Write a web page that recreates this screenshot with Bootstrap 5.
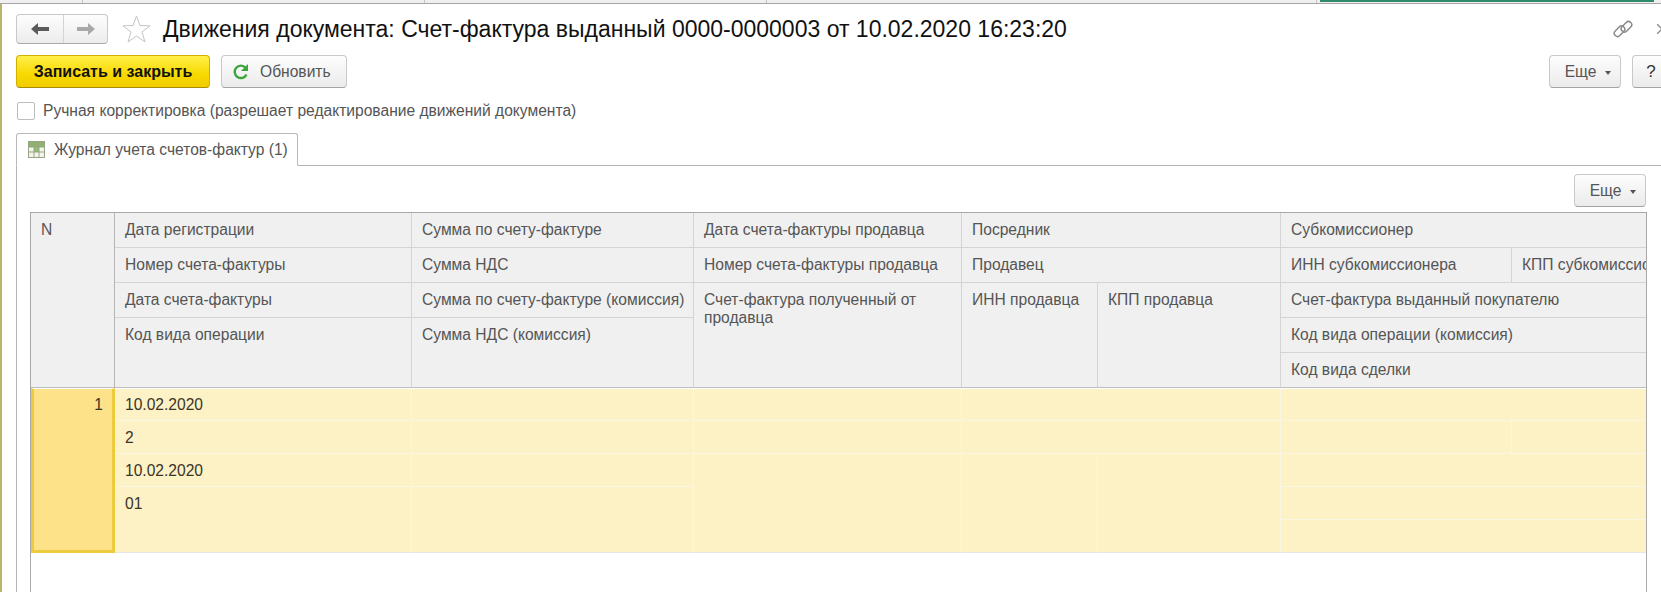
<!DOCTYPE html>
<html lang="ru">

<head>
    <meta charset="UTF-8">
    <meta name="viewport" content="width=device-width, initial-scale=1.0">
    <link href="https://cdn.jsdelivr.net/npm/bootstrap@5.3.2/dist/css/bootstrap.min.css" rel="stylesheet">
    <script src="https://cdn.jsdelivr.net/npm/bootstrap@5.3.2/dist/js/bootstrap.bundle.min.js"></script>
    <title>Движения документа</title>
    <style>
        html, body {
            height: 592px;
            overflow: hidden;
        }

        body {
            background-color: #fff;
            font-family: "Liberation Sans", Arial, sans-serif;
            font-size: 15.6px;
            color: #555;
        }

        .top-strip {
            height: 4px;
            background-color: #f0f0f0;
            border-bottom: 1px solid #a5a5a5;
        }

        .strip-cell {
            height: 3px;
            border-right: 1px solid #c4c4c4;
        }

        .strip-green {
            width: 334px;
            height: 2px;
            margin-left: 3px;
            background-color: #2f8a6c;
        }

        .page-wrap {
            height: 588px;
            border-left: 2px solid #b9b56f;
            padding: 10px 0 0 14px;
        }

        .head-row {
            height: 30px;
        }

        .nav-pair {
            width: 92px;
            height: 30px;
            border: 1px solid #c9c9c9;
            border-bottom-color: #a9a9a9;
            border-radius: 4px;
            background: linear-gradient(#fdfdfd, #ececec);
        }

        .nav-pair span {
            height: 100%;
        }

        .nav-back {
            width: 46px;
        }

        .nav-fwd {
            flex: 1;
            border-left: 1px solid #d4d4d4;
        }

        .star-icon {
            margin-left: 14px;
        }

        .doc-title {
            font-size: 23px;
            color: #111;
            white-space: nowrap;
            margin-left: 12px;
        }

        .link-glyph {
            margin-left: auto;
            margin-right: 24px;
        }

        .close-glyph {
            margin-right: -6px;
        }

        .tool-row {
            height: 33px;
            margin-top: 11px;
        }

        .btn-1c {
            height: 33px;
            padding: 0;
            font-size: 15.6px;
            color: #555;
            border: 1px solid #c9c9c9;
            border-bottom-color: #a3a3a3;
            border-radius: 4px;
            background: linear-gradient(#fdfdfd, #ebebeb);
        }

        .btn-save {
            width: 194px;
            font-size: 16px;
            font-weight: 700;
            color: #111;
            border-color: #d2b000;
            border-bottom-color: #a98e00;
            background: linear-gradient(#fff04a, #f8d800 60%, #f1cc00);
        }

        .btn-refresh {
            width: 126px;
            margin-left: 11px;
            padding-left: 10px;
            gap: 10px;
        }

        .btn-more {
            width: 72px;
            padding-left: 6px;
        }

        .btn-help {
            width: 38px;
            margin-left: 11px;
            margin-right: -9px;
            font-size: 17px;
            color: #333;
        }

        .caret-1c {
            display: inline-block;
            border-top: 4px solid #555;
            border-left: 3.5px solid transparent;
            border-right: 3.5px solid transparent;
            margin-left: 9px;
            vertical-align: 2px;
        }

        .check-row {
            margin-top: 14px;
            height: 18px;
            gap: 8px;
        }

        .check-1c {
            width: 18px;
            height: 18px;
            margin-left: 1px;
            border: 1px solid #bdbdbd;
            border-radius: 2px;
        }

        .tab-1c {
            width: 282px;
            height: 33px;
            margin-top: 13px;
            margin-bottom: -1px;
            padding-left: 11px;
            gap: 9px;
            position: relative;
            border: 1px solid #b9b9b9;
            border-bottom: 1px solid #fff;
            border-radius: 3px 3px 0 0;
            background-color: #fff;
        }

        .tab-body {
            height: 427px;
            border-top: 1px solid #b3b3b3;
            border-left: 1px solid #b3b3b3;
            padding: 8px 0 0 13px;
        }

        .tab-tools {
            width: 1616px;
            height: 33px;
        }

        .grid-wrap {
            width: 1617px;
            height: 400px;
            margin-top: 5px;
            overflow: hidden;
            border: 1px solid #a8a8a8;
            border-bottom: 0;
        }

        .grid-1c {
            table-layout: fixed;
            width: 1615px;
            margin: 0;
            border-collapse: separate;
            border-spacing: 0;
        }

        .grid-1c th, .grid-1c td {
            padding: 8px 10px 0;
            font-weight: 400;
            vertical-align: top;
            white-space: nowrap;
            overflow: hidden;
            line-height: 18px;
            box-shadow: none;
            color: #555;
        }

        .grid-1c th.wrap-text {
            white-space: normal;
        }

        .grid-1c thead th {
            height: 35px;
            background-color: #f0f0f0;
            border: 0;
            border-right: 1px solid #d4d4d4;
            border-bottom: 1px solid #d4d4d4;
        }

        .grid-1c thead tr:last-child th, .grid-1c thead th.to-bottom {
            border-bottom: 1px solid #bdbdbd;
        }

        .grid-1c thead th.n-head {
            border-right-color: #b5b5b5;
        }

        .grid-1c tbody td {
            height: 33px;
            background-color: #fdf1c6;
            border: 0;
            border-right: 1px solid #fbf6e3;
            border-bottom: 1px solid #fbf6e3;
            color: #3b3526;
        }

        .grid-1c tbody tr:first-child td {
            padding-top: 7px;
            border-top: 1px solid #fff;
        }

        .grid-1c tbody td.to-end, .grid-1c tbody tr:last-child td {
            border-bottom: 1px solid #e6e6e2;
        }

        .grid-1c tbody td.row-cur {
            text-align: right;
            padding: 6px 9px 0 0;
            background-color: #fde28a;
            border: 3px solid #eccb3c;
        }

        .no-right {
            border-right: 0 !important;
        }
    </style>
</head>

<body>

    <div class="top-strip d-flex">
        <div class="strip-cell" style="width:83px"></div>
        <div class="strip-cell" style="width:342px"></div>
        <div class="strip-cell" style="width:342px"></div>
        <div class="strip-cell" style="width:550px"></div>
        <div class="strip-green"></div>
    </div>

    <div class="page-wrap">

        <div class="head-row d-flex align-items-center">
            <div class="nav-pair d-flex">
                <span class="nav-back d-flex align-items-center justify-content-center">
                    <svg width="18" height="12" viewBox="0 0 18 12"><path d="M0 6 7 0V4H18V8H7V12Z" fill="#5a5a5a" /></svg>
                </span>
                <span class="nav-fwd d-flex align-items-center justify-content-center">
                    <svg width="18" height="12" viewBox="0 0 18 12"><path d="M18 6 11 0V4H0V8H11V12Z" fill="#a8a8a8" /></svg>
                </span>
            </div>
            <svg class="star-icon" width="29" height="28" viewBox="0 0 29 28"><path d="M14.5 1 18 10.5 28 10.8 20 17 23 27 14.5 21 6 27 9 17 1 10.8 11 10.5Z" fill="#fff" stroke="#c4c4c4" /></svg>
            <div class="doc-title">Движения документа: Счет-фактура выданный 0000-0000003 от 10.02.2020 16:23:20</div>
            <svg class="link-glyph" width="20" height="20" viewBox="0 0 20 20" fill="none" stroke="#8a8a8a" stroke-width="1.5">
                <rect x="0.5" y="9" width="12" height="6.5" rx="3.2" transform="rotate(-45 6.5 12.2)" />
                <rect x="7.5" y="4.5" width="12" height="6.5" rx="3.2" transform="rotate(-45 13.5 7.8)" />
            </svg>
            <svg class="close-glyph" width="10" height="10" viewBox="0 0 10 10" fill="none" stroke="#8e8e8e" stroke-width="1.3"><path d="M0 0 10 10M10 0 0 10" /></svg>
        </div>

        <div class="tool-row d-flex">
            <button type="button" class="btn btn-1c btn-save">Записать и закрыть</button>
            <button type="button" class="btn btn-1c btn-refresh d-flex align-items-center">
                <svg width="18" height="18" viewBox="0 0 18 18" fill="none"><path d="M14.5 11.5A6.2 6.2 0 1 1 13.6 4.8" stroke="#3aa53a" stroke-width="2.4" /><path d="M16 1V8H9Z" fill="#3aa53a" /></svg>
                <span>Обновить</span>
            </button>
            <button type="button" class="btn btn-1c btn-more ms-auto">Еще<span class="caret-1c"></span></button>
            <button type="button" class="btn btn-1c btn-help">?</button>
        </div>

        <div class="check-row d-flex align-items-center">
            <div class="check-1c"></div>
            <span>Ручная корректировка (разрешает редактирование движений документа)</span>
        </div>

        <div class="tab-1c d-flex align-items-center">
            <svg width="17" height="17" viewBox="0 0 17 17">
                <rect x="0.5" y="0.5" width="16" height="16" fill="#f4f5ea" stroke="#98a38a" />
                <rect x="1" y="1" width="15" height="5" fill="#8fb368" />
                <rect x="6" y="6" width="5" height="5" fill="#8fbf6a" />
                <path d="M1 6H16M1 11H16M6 1V16M11 1V16" stroke="#98a38a" />
            </svg>
            <span>Журнал учета счетов-фактур (1)</span>
        </div>

        <div class="tab-body">
            <div class="tab-tools d-flex justify-content-end">
                <button type="button" class="btn btn-1c btn-more">Еще<span class="caret-1c"></span></button>
            </div>

            <div class="grid-wrap">
                <table class="table grid-1c">
                    <colgroup>
                        <col style="width:84px">
                        <col style="width:297px">
                        <col style="width:282px">
                        <col style="width:268px">
                        <col style="width:136px">
                        <col style="width:183px">
                        <col style="width:231px">
                        <col style="width:134px">
                    </colgroup>
                    <thead>
                        <tr>
                            <th rowspan="5" class="n-head to-bottom">N</th>
                            <th>Дата регистрации</th>
                            <th>Сумма по счету-фактуре</th>
                            <th>Дата счета-фактуры продавца</th>
                            <th colspan="2">Посредник</th>
                            <th colspan="2" class="no-right">Субкомиссионер</th>
                        </tr>
                        <tr>
                            <th>Номер счета-фактуры</th>
                            <th>Сумма НДС</th>
                            <th>Номер счета-фактуры продавца</th>
                            <th colspan="2">Продавец</th>
                            <th>ИНН субкомиссионера</th>
                            <th class="no-right">КПП субкомиссионера</th>
                        </tr>
                        <tr>
                            <th>Дата счета-фактуры</th>
                            <th>Сумма по счету-фактуре (комиссия)</th>
                            <th rowspan="3" class="wrap-text to-bottom">Счет-фактура полученный от продавца</th>
                            <th rowspan="3" class="to-bottom">ИНН продавца</th>
                            <th rowspan="3" class="to-bottom">КПП продавца</th>
                            <th colspan="2" class="no-right">Счет-фактура выданный покупателю</th>
                        </tr>
                        <tr>
                            <th rowspan="2" class="to-bottom">Код вида операции</th>
                            <th rowspan="2" class="to-bottom">Сумма НДС (комиссия)</th>
                            <th colspan="2" class="no-right">Код вида операции (комиссия)</th>
                        </tr>
                        <tr>
                            <th colspan="2" class="no-right">Код вида сделки</th>
                        </tr>
                    </thead>
                    <tbody>
                        <tr>
                            <td rowspan="5" class="row-cur">1</td>
                            <td>10.02.2020</td>
                            <td></td>
                            <td></td>
                            <td colspan="2"></td>
                            <td colspan="2" class="no-right"></td>
                        </tr>
                        <tr>
                            <td>2</td>
                            <td></td>
                            <td></td>
                            <td colspan="2"></td>
                            <td></td>
                            <td class="no-right"></td>
                        </tr>
                        <tr>
                            <td>10.02.2020</td>
                            <td></td>
                            <td rowspan="3" class="to-end"></td>
                            <td rowspan="3" class="to-end"></td>
                            <td rowspan="3" class="to-end"></td>
                            <td colspan="2" class="no-right"></td>
                        </tr>
                        <tr>
                            <td rowspan="2" class="to-end">01</td>
                            <td rowspan="2" class="to-end"></td>
                            <td colspan="2" class="no-right"></td>
                        </tr>
                        <tr>
                            <td colspan="2" class="no-right"></td>
                        </tr>
                    </tbody>
                </table>
            </div>
        </div>

    </div>

</body>

</html>
